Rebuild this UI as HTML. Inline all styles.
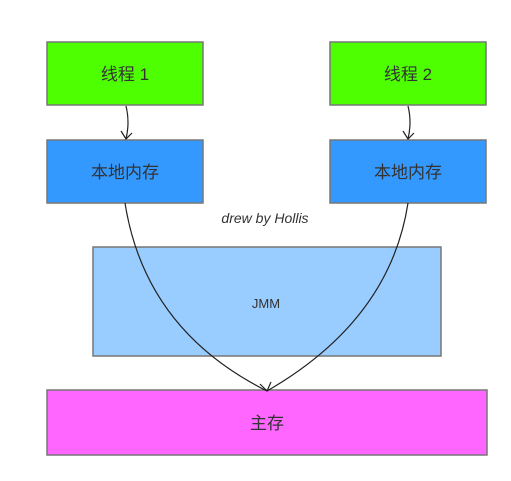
<!DOCTYPE html>
<html><head><meta charset="utf-8"><style>
html,body{margin:0;padding:0;background:#fff;width:511px;height:481px;overflow:hidden}
text{font-family:"Liberation Sans","Noto Sans CJK SC",sans-serif;fill:#333}
</style></head><body>
<svg width="511" height="481" viewBox="0 0 511 481">
<g stroke="#777" stroke-width="1.5">
<rect x="47" y="42" width="156" height="63" fill="#4dff00"/>
<rect x="330" y="42" width="156" height="63" fill="#4dff00"/>
<rect x="47" y="140" width="156" height="63" fill="#3399ff"/>
<rect x="330" y="140" width="156" height="63" fill="#3399ff"/>
<rect x="93" y="247" width="348" height="109" fill="#99ccff"/>
<rect x="47" y="390" width="440" height="65" fill="#ff66ff"/>
</g>
<g stroke="#222" stroke-width="1.2" fill="none">
<path d="M126 106 Q130 122 126 139"/><path d="M121 131 L126 139 L132 133"/>
<path d="M408 106 Q412 122 408 139"/><path d="M403 131 L408 139 L414 133"/>
<path d="M125 203 Q145 330 267 391"/>
<path d="M408 203 Q390 320 267 391"/>
<path d="M260 384 L267 391 L271 382"/>
</g>
<text x="125" y="80" font-size="17" text-anchor="middle">线程 1</text>
<text x="408" y="80" font-size="17" text-anchor="middle">线程 2</text>
<text x="125" y="178" font-size="17" text-anchor="middle">本地内存</text>
<text x="408" y="178" font-size="17" text-anchor="middle">本地内存</text>
<text x="265" y="223" font-size="14" text-anchor="middle" font-style="italic">drew by Hollis</text>
<text x="266" y="308" font-size="13" text-anchor="middle">JMM</text>
<text x="267" y="429" font-size="17" text-anchor="middle">主存</text>
</svg>
</body></html>
